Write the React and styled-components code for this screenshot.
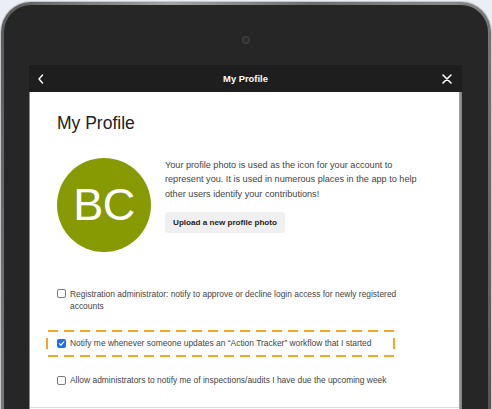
import React from "react";
import styled, { createGlobalStyle } from "styled-components";

const Global = createGlobalStyle`
  html, body { margin: 0; padding: 0; }
  body {
    background: #eceef5;
    overflow: hidden;
    height: 409px;
    font-family: "Liberation Sans", Arial, Helvetica, sans-serif;
  }
  * { box-sizing: border-box; }
`;

const Device = styled.div`
  margin: 2px 1px 0 1px;
  width: 490px;
  height: 407px;
  padding: 3px 3px 0 3px;
  border-radius: 30px 30px 0 0;
  background: linear-gradient(100deg, #5a5a5a 0%, #8e8e8e 22%, #a4a4a4 30%, #6c6c6c 55%, #8a8a8a 80%, #565656 100%);
  box-shadow: 0 0 0 1px #c9cad0;
  display: flex;
  overflow: hidden;
`;

const Bezel = styled.div`
  flex: 1;
  background: #262626;
  border-radius: 27px 27px 0 0;
  display: flex;
  flex-direction: column;
  align-items: center;
`;

const Camera = styled.div`
  margin-top: 31px;
  width: 8px;
  height: 8px;
  border-radius: 50%;
  background: #2c2c2c;
  box-shadow: inset 0 0 0 1.5px #3e3e3e;
`;

const Screen = styled.div`
  align-self: stretch;
  margin: 21px 26px 0 25px;
  display: flex;
  flex-direction: column;
  flex: 1;
`;

const Header = styled.div`
  height: 27px;
  flex-shrink: 0;
  background: #1e1e1e;
  display: grid;
  grid-template-columns: 40px 1fr 40px;
  align-items: center;
  color: #fff;
`;

const HeaderTitle = styled.div`
  text-align: center;
  font-weight: 700;
  font-size: 9.4px;
`;

const HeaderIcon = styled.div`
  display: flex;
  justify-content: ${(p) => (p.$right ? "flex-end" : "flex-start")};
  padding: ${(p) => (p.$right ? "0 10px 0 0" : "0 0 0 8px")};
  svg { display: block; }
`;

const Body = styled.div`
  display: flex;
  flex: 1;
`;

const Content = styled.div`
  flex: 1;
  background: #fff;
  border-left: 1px solid #8d8d8d;
  display: flex;
  flex-direction: column;
`;

const Scrollbar = styled.div`
  width: 3px;
  background: linear-gradient(90deg, #a3a3a3, #7d7d7d);
`;

const Inner = styled.div`
  padding: 21px 0 0 27px;
  display: flex;
  flex-direction: column;
`;

const Title = styled.h1`
  margin: 0;
  font-weight: 400;
  font-size: 17.5px;
  line-height: 21px;
  color: #222;
`;

const ProfileRow = styled.div`
  margin-top: 24px;
  display: flex;
  gap: 14px;
  align-items: flex-start;
`;

const Avatar = styled.div`
  width: 94px;
  height: 94px;
  border-radius: 50%;
  background: #879a03;
  color: #fff;
  display: flex;
  align-items: center;
  justify-content: center;
  font-size: 45px;
  letter-spacing: -0.5px;
  flex-shrink: 0;
`;

const ProfileText = styled.div`
  display: flex;
  flex-direction: column;
  align-items: flex-start;
  width: 270px;
`;

const Para = styled.p`
  margin: 0;
  font-size: 9.15px;
  line-height: 14.3px;
  color: #444;
`;

const Button = styled.button`
  margin-top: 11px;
  height: 21.5px;
  width: 120px;
  padding: 0;
  border: none;
  border-radius: 3px;
  background: #f0f0f0;
  color: #222;
  font-family: inherit;
  font-weight: 700;
  font-size: 8.1px;
`;

const Option = styled.div`
  display: flex;
  align-items: flex-start;
  gap: 4px;
  font-size: 8.43px;
  line-height: 12.5px;
  color: #444;
  width: ${(p) => p.$width || "auto"};
  margin-top: ${(p) => p.$mt || 0}px;
`;

const Box = styled.span`
  flex-shrink: 0;
  width: 9px;
  height: 9px;
  margin-top: 1.5px;
  border-radius: 2px;
  border: ${(p) => (p.$checked ? "none" : "1px solid #7a7a7a")};
  background: ${(p) => (p.$checked ? "#1c6ff0" : "#fff")};
  display: flex;
  align-items: center;
  justify-content: center;
`;

const Highlight = styled.div`
  margin: 17px 0 0 -11px;
  width: 349px;
  height: 27px;
  padding: 7.5px 0 0 11px;
  background:
    linear-gradient(90deg, #f6a623 10px, transparent 10px) 2px 0 / 16px 2px repeat-x,
    linear-gradient(90deg, #f6a623 10px, transparent 10px) 2px 100% / 16px 2px repeat-x,
    linear-gradient(180deg, transparent 8px, #f6a623 8px, #f6a623 calc(100% - 8px), transparent calc(100% - 8px)) 0 0 / 2px 100% no-repeat,
    linear-gradient(180deg, transparent 8px, #f6a623 8px, #f6a623 calc(100% - 8px), transparent calc(100% - 8px)) 100% 0 / 2px 100% no-repeat;
`;

const Divider = styled.div`
  margin-top: 20px;
  height: 1.5px;
  background: #dcdcdc;
`;

const Check = () => (
  <svg width="7" height="7" viewBox="0 0 10 10">
    <path d="M2 5.2 L4.2 7.4 L8.2 2.6" fill="none" stroke="#fff" strokeWidth="1.8" strokeLinecap="round" strokeLinejoin="round" />
  </svg>
);

function CheckOption({ checked, children, ...rest }) {
  return (
    <Option {...rest}>
      <Box $checked={checked}>{checked && <Check />}</Box>
      <span>{children}</span>
    </Option>
  );
}

export default function App() {
  return (
    <>
      <Global />
      <Device>
        <Bezel>
          <Camera />
          <Screen>
            <Header>
              <HeaderIcon>
                <svg width="8" height="10" viewBox="0 0 8 10">
                  <path d="M5.5 1 L2 5 L5.5 9" fill="none" stroke="#fff" strokeWidth="1.4" strokeLinecap="round" strokeLinejoin="round" />
                </svg>
              </HeaderIcon>
              <HeaderTitle>My Profile</HeaderTitle>
              <HeaderIcon $right>
                <svg width="10" height="10" viewBox="0 0 10 10">
                  <path d="M1 1 L9 9 M9 1 L1 9" fill="none" stroke="#fff" strokeWidth="1.6" strokeLinecap="round" />
                </svg>
              </HeaderIcon>
            </Header>
            <Body>
              <Content>
                <Inner>
                  <Title>My Profile</Title>
                  <ProfileRow>
                    <Avatar>BC</Avatar>
                    <ProfileText>
                      <Para>
                        Your profile photo is used as the icon for your account to
                        <br />
                        represent you. It is used in numerous places in the app to help
                        <br />
                        other users identify your contributions!
                      </Para>
                      <Button>Upload a new profile photo</Button>
                    </ProfileText>
                  </ProfileRow>
                  <CheckOption $mt={35.5} $width="348px">
                    Registration administrator: notify to approve or decline login access for newly registered accounts
                  </CheckOption>
                  <Highlight>
                    <CheckOption checked>
                      Notify me whenever someone updates an “Action Tracker” workflow that I started
                    </CheckOption>
                  </Highlight>
                  <CheckOption $mt={17.75}>
                    Allow administrators to notify me of inspections/audits I have due the upcoming week
                  </CheckOption>
                </Inner>
                <Divider />
              </Content>
              <Scrollbar />
            </Body>
          </Screen>
        </Bezel>
      </Device>
    </>
  );
}
